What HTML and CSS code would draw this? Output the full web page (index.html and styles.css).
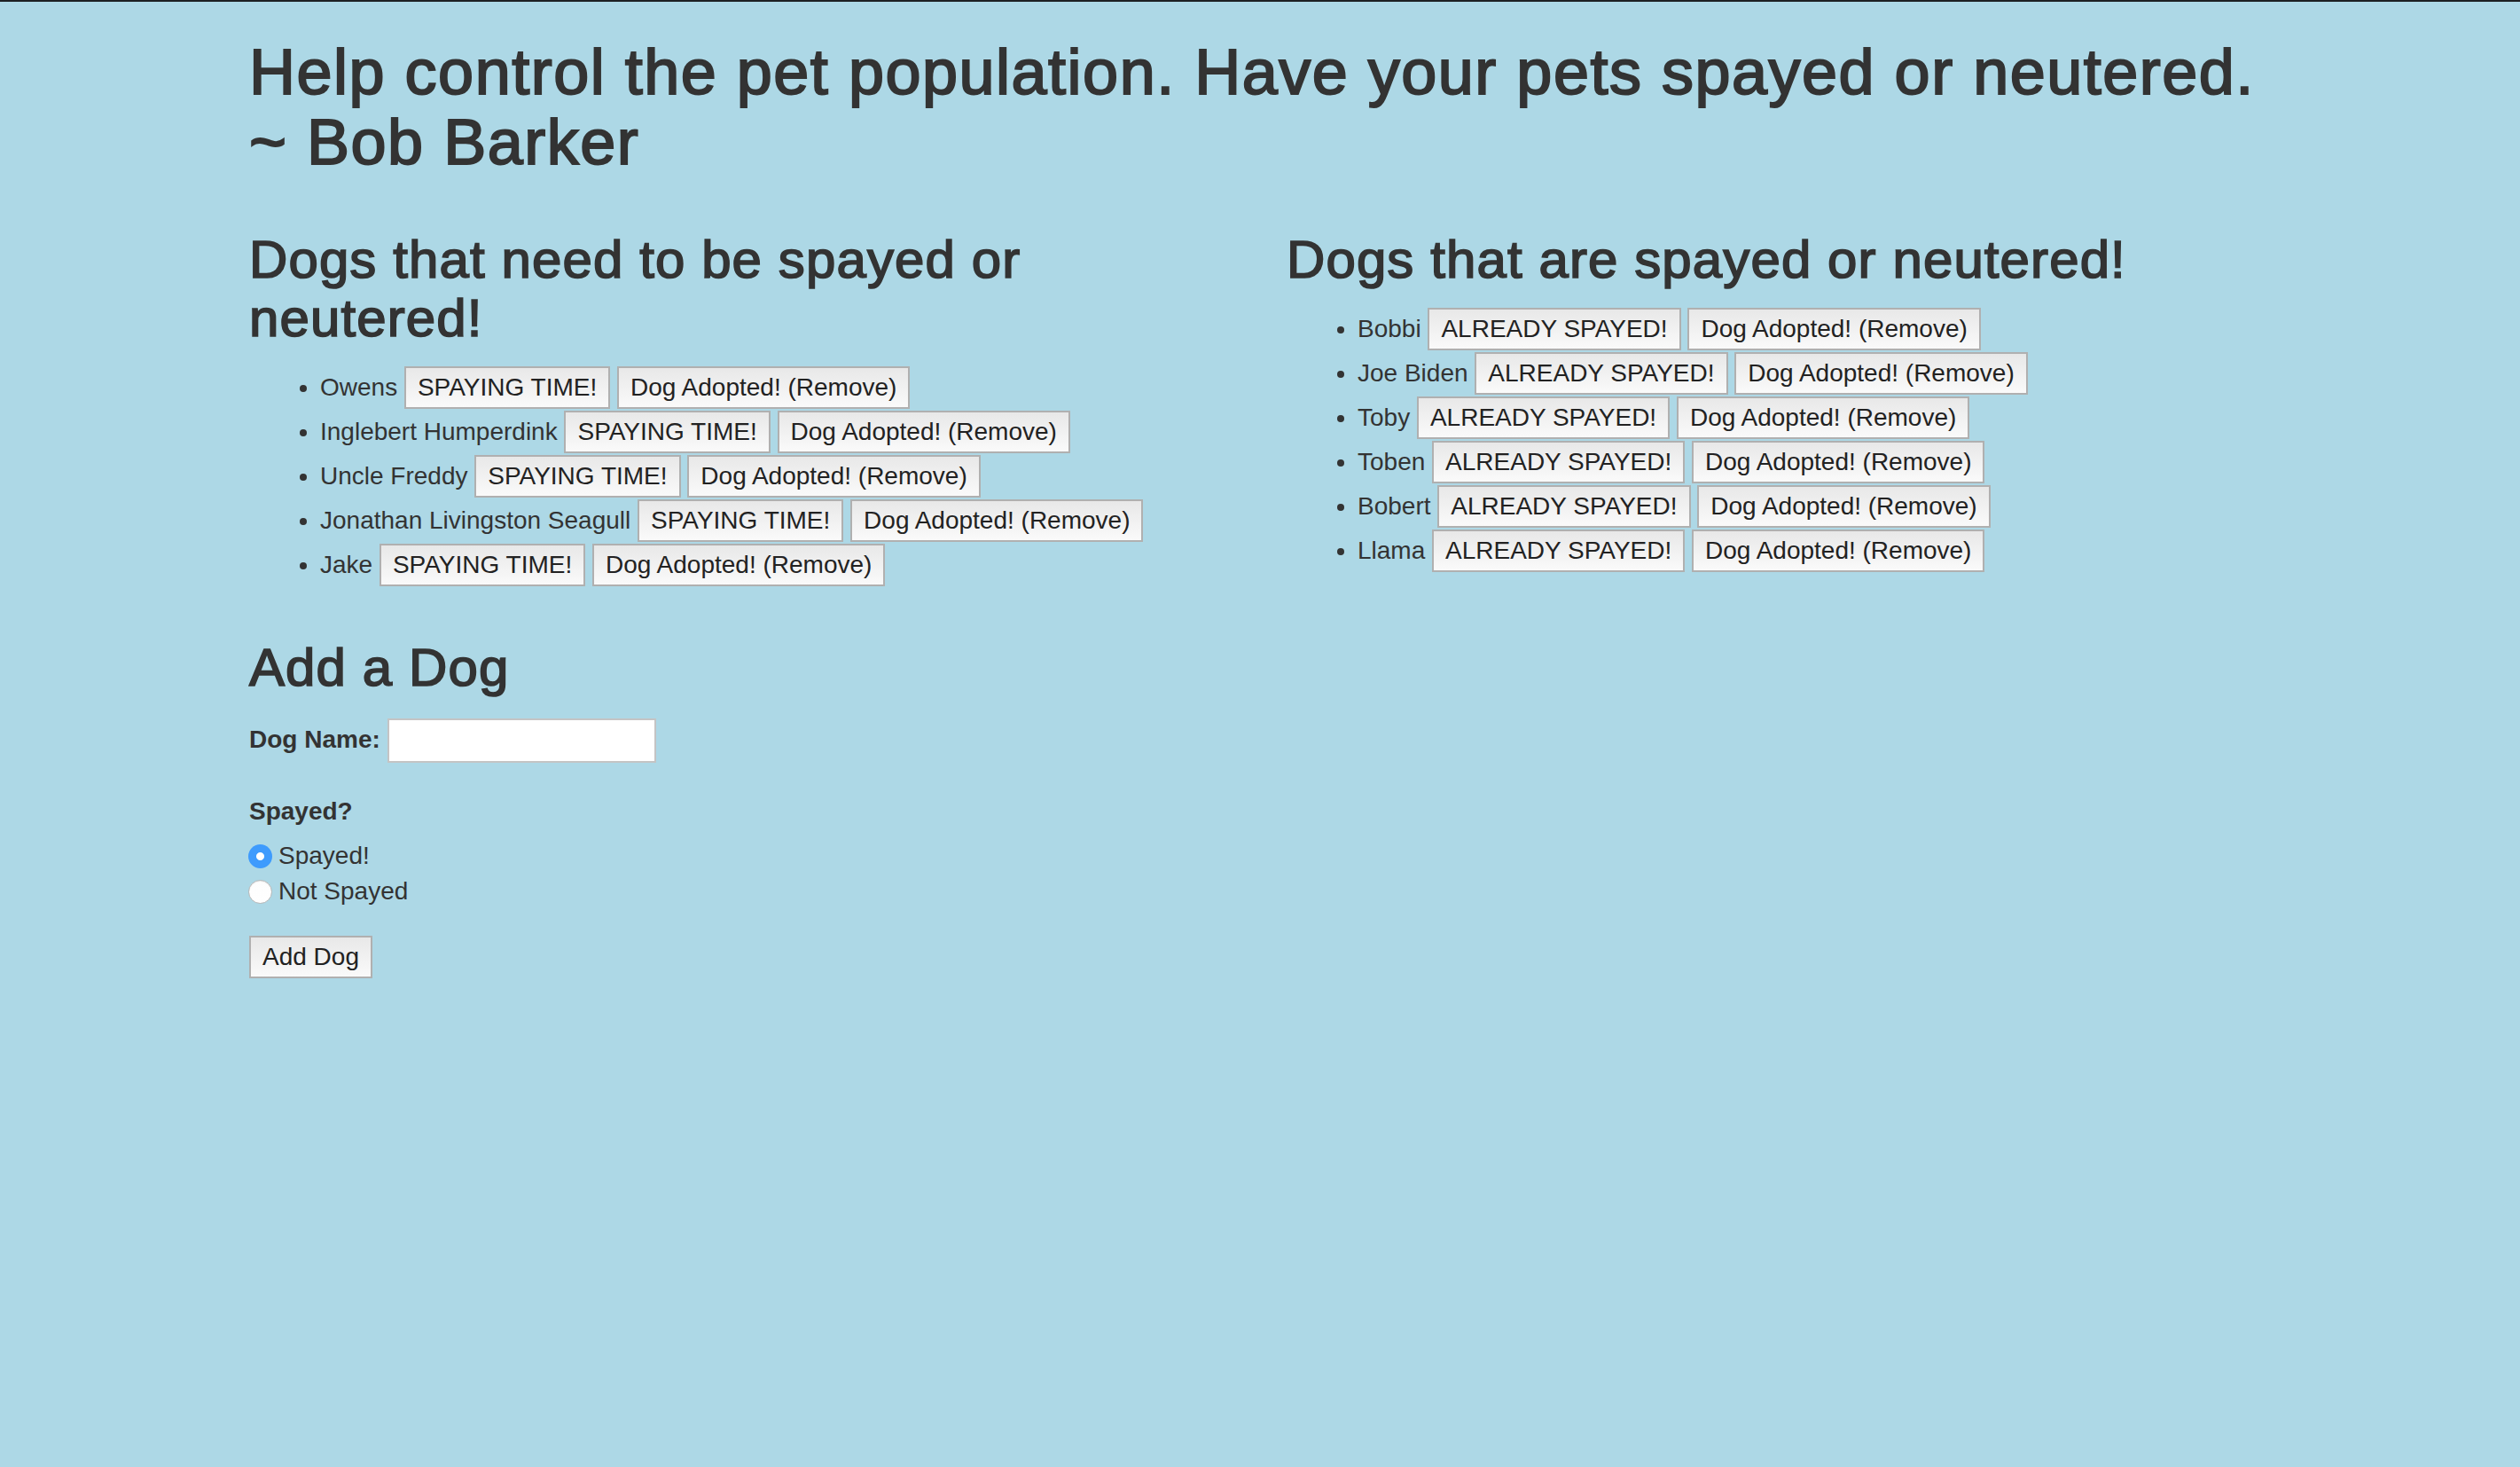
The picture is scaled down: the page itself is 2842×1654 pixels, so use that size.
FILE: index.html
```html
<!DOCTYPE html>
<html lang="en">
<head>
<meta charset="utf-8">
<title>Spay and Neuter</title>
<link rel="stylesheet" href="styles.css">
</head>
<body>
<div class="page">
  <h1 class="quote">Help control the pet population. Have your pets spayed or neutered. ~ Bob Barker</h1>
  <div class="cols">
    <div class="col">
      <h2 class="title">Dogs that need to be spayed or neutered!</h2>
      <ul class="dogs">
        <li>Owens <button class="btn">SPAYING TIME!</button> <button class="btn">Dog Adopted! (Remove)</button></li>
        <li>Inglebert Humperdink <button class="btn">SPAYING TIME!</button> <button class="btn">Dog Adopted! (Remove)</button></li>
        <li>Uncle Freddy <button class="btn">SPAYING TIME!</button> <button class="btn">Dog Adopted! (Remove)</button></li>
        <li>Jonathan Livingston Seagull <button class="btn">SPAYING TIME!</button> <button class="btn">Dog Adopted! (Remove)</button></li>
        <li>Jake <button class="btn">SPAYING TIME!</button> <button class="btn">Dog Adopted! (Remove)</button></li>
      </ul>
      <form class="add-form">
        <h2 class="title add-title">Add a Dog</h2>
        <div class="field">
          <label class="lbl" for="dogname">Dog Name:</label> <input class="text-input" id="dogname" type="text">
        </div>
        <div class="lbl spayed-lbl">Spayed?</div>
        <div class="radios">
          <label class="radio-row"><input class="radio" type="radio" name="spayed" checked> Spayed!</label>
          <label class="radio-row"><input class="radio" type="radio" name="spayed"> Not Spayed</label>
        </div>
        <button class="btn add-btn" type="button">Add Dog</button>
      </form>
    </div>
    <div class="col">
      <h2 class="title">Dogs that are spayed or neutered!</h2>
      <ul class="dogs">
        <li>Bobbi <button class="btn">ALREADY SPAYED!</button> <button class="btn">Dog Adopted! (Remove)</button></li>
        <li>Joe Biden <button class="btn">ALREADY SPAYED!</button> <button class="btn">Dog Adopted! (Remove)</button></li>
        <li>Toby <button class="btn">ALREADY SPAYED!</button> <button class="btn">Dog Adopted! (Remove)</button></li>
        <li>Toben <button class="btn">ALREADY SPAYED!</button> <button class="btn">Dog Adopted! (Remove)</button></li>
        <li>Bobert <button class="btn">ALREADY SPAYED!</button> <button class="btn">Dog Adopted! (Remove)</button></li>
        <li>Llama <button class="btn">ALREADY SPAYED!</button> <button class="btn">Dog Adopted! (Remove)</button></li>
      </ul>
    </div>
  </div>
</div>
</body>
</html>
```

FILE: styles.css
```css
html, body {
  margin: 0;
  padding: 0;
}
body {
  background: #add8e6;
  color: #333;
  font-family: "Liberation Sans", Arial, sans-serif;
  font-size: 28px;
  line-height: 40px;
  border-top: 2px solid #1d2023;
  min-height: 1652px;
}
.page {
  width: 2340px;
  margin: 0 auto;
  padding: 0 30px;
  box-sizing: border-box;
}
.quote {
  font-size: 72px;
  line-height: 1.1;
  font-weight: 400;
  letter-spacing: 1.5px;
  -webkit-text-stroke: 2px #333;
  margin: 40px 0 20px;
}
.cols {
  display: grid;
  grid-template-columns: 1fr 1fr;
  column-gap: 60px;
}
.title {
  font-size: 60px;
  line-height: 1.1;
  font-weight: 400;
  letter-spacing: 1.1px;
  -webkit-text-stroke: 1.7px #333;
  margin: 40px 0 20px;
}
.dogs {
  margin: 0 0 20px;
  padding-left: 80px;
}
.dogs li {
  padding: 1px 0;
}
.btn {
  font-family: inherit;
  font-size: 28px;
  line-height: 40px;
  color: #222;
  padding: 2px 13px;
  margin: 0;
  border: 2px solid #b0b0b0;
  border-radius: 0;
  background: linear-gradient(#e8e8e8, #fafafa);
}
.add-form {
  margin: 0;
}
.add-title {
  margin-top: 58px;
  margin-bottom: 24px;
}
.field {
  margin-bottom: 35px;
}
.lbl {
  font-weight: 700;
  display: inline-block;
}
.text-input {
  width: 303px;
  height: 50px;
  box-sizing: border-box;
  border: 2px solid #c4c4c4;
  background: #fff;
  padding: 2px 4px;
  margin: 0;
  vertical-align: middle;
  font: inherit;
}
.spayed-lbl {
  display: block;
  margin-bottom: 10px;
}
.radios {
  display: flex;
  flex-direction: column;
  margin-bottom: 30px;
}
.radio-row {
  display: flex;
  align-items: center;
  gap: 7px;
}
.radio {
  appearance: none;
  -webkit-appearance: none;
  width: 27px;
  height: 27px;
  margin: 0 0 0 -1px;
  border-radius: 50%;
  box-sizing: border-box;
  border: 1px solid #b8b8b8;
  background: linear-gradient(#fdfdfd, #ffffff);
  box-shadow: inset 0 1px 1px rgba(0,0,0,0.08);
}
.radio:checked {
  border: none;
  background: radial-gradient(circle, #ffffff 0 4px, #3e9bfd 5px);
  box-shadow: none;
}
.add-btn {
  display: block;
}
```
